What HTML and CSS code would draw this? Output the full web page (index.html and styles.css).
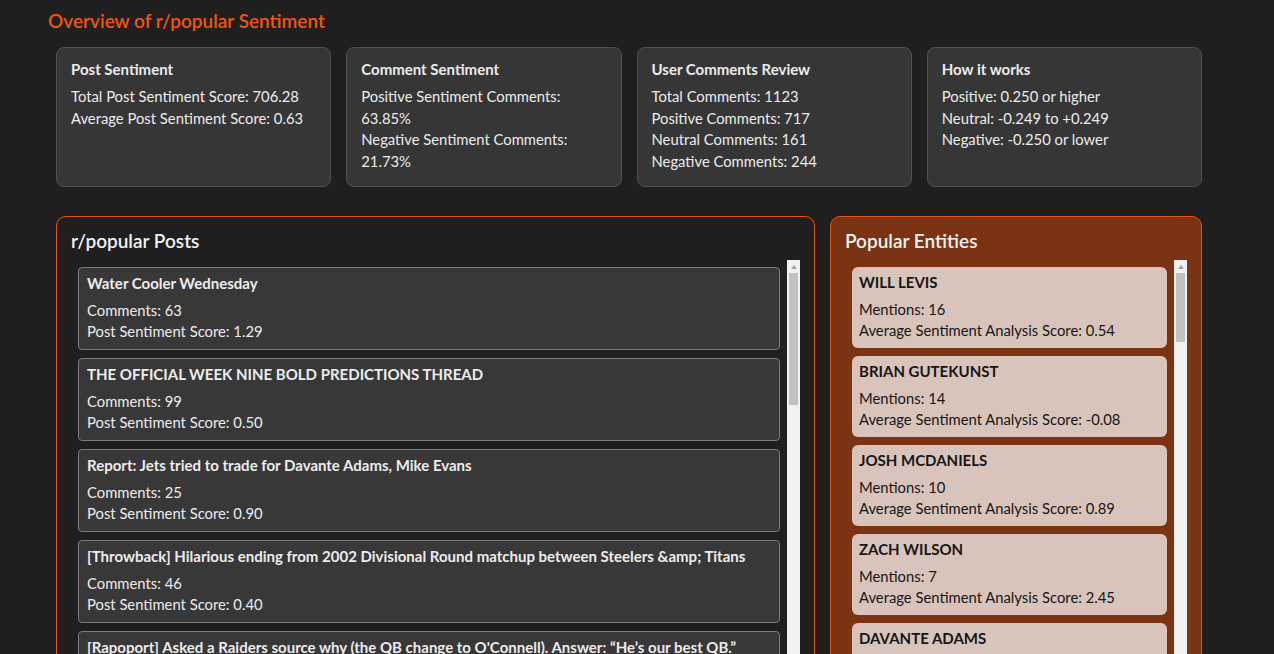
FILE: index.html
```html
<!DOCTYPE html>
<html lang="en">
<head>
<meta charset="utf-8">
<title>r/popular Sentiment</title>
<link rel="stylesheet" href="styles.css">
</head>
<body>
<main class="page">
  <h1 class="page-title">Overview of r/popular Sentiment</h1>

  <section class="stats">
    <div class="stat-card">
      <h2 class="stat-title">Post Sentiment</h2>
      <p class="stat-line">Total Post Sentiment Score: 706.28</p>
      <p class="stat-line">Average Post Sentiment Score: 0.63</p>
    </div>
    <div class="stat-card">
      <h2 class="stat-title">Comment Sentiment</h2>
      <p class="stat-line">Positive Sentiment Comments: 63.85%</p>
      <p class="stat-line">Negative Sentiment Comments: 21.73%</p>
    </div>
    <div class="stat-card">
      <h2 class="stat-title">User Comments Review</h2>
      <p class="stat-line">Total Comments: 1123</p>
      <p class="stat-line">Positive Comments: 717</p>
      <p class="stat-line">Neutral Comments: 161</p>
      <p class="stat-line">Negative Comments: 244</p>
    </div>
    <div class="stat-card">
      <h2 class="stat-title">How it works</h2>
      <p class="stat-line">Positive: 0.250 or higher</p>
      <p class="stat-line">Neutral: -0.249 to +0.249</p>
      <p class="stat-line">Negative: -0.250 or lower</p>
    </div>
  </section>

  <section class="panels">
    <div class="panel panel-posts">
      <h2 class="panel-title">r/popular Posts</h2>
      <div class="list-wrap">
        <div class="scroll-list">
          <div class="post">
            <h3 class="post-title">Water Cooler Wednesday</h3>
            <p class="post-line">Comments: 63</p>
            <p class="post-line">Post Sentiment Score: 1.29</p>
          </div>
          <div class="post">
            <h3 class="post-title">THE OFFICIAL WEEK NINE BOLD PREDICTIONS THREAD</h3>
            <p class="post-line">Comments: 99</p>
            <p class="post-line">Post Sentiment Score: 0.50</p>
          </div>
          <div class="post">
            <h3 class="post-title">Report: Jets tried to trade for Davante Adams, Mike Evans</h3>
            <p class="post-line">Comments: 25</p>
            <p class="post-line">Post Sentiment Score: 0.90</p>
          </div>
          <div class="post">
            <h3 class="post-title">[Throwback] Hilarious ending from 2002 Divisional Round matchup between Steelers &amp;amp; Titans</h3>
            <p class="post-line">Comments: 46</p>
            <p class="post-line">Post Sentiment Score: 0.40</p>
          </div>
          <div class="post">
            <h3 class="post-title">[Rapoport] Asked a Raiders source why (the QB change to O'Connell). Answer: “He’s our best QB.”</h3>
            <p class="post-line">Comments: 88</p>
            <p class="post-line">Post Sentiment Score: 0.71</p>
          </div>
          <div class="post">
            <h3 class="post-title">Titans QB Will Levis to start against the Falcons</h3>
            <p class="post-line">Comments: 112</p>
            <p class="post-line">Post Sentiment Score: 0.82</p>
          </div>
        </div>
        <div class="scrollbar" aria-hidden="true">
          <div class="scroll-arrow"></div>
          <div class="scroll-thumb thumb-posts"></div>
        </div>
      </div>
    </div>

    <div class="panel panel-entities">
      <h2 class="panel-title">Popular Entities</h2>
      <div class="list-wrap">
        <div class="scroll-list">
          <div class="entity"><h3 class="entity-name">WILL LEVIS</h3><p class="entity-line">Mentions: 16</p><p class="entity-line">Average Sentiment Analysis Score: 0.54</p></div>
          <div class="entity"><h3 class="entity-name">BRIAN GUTEKUNST</h3><p class="entity-line">Mentions: 14</p><p class="entity-line">Average Sentiment Analysis Score: -0.08</p></div>
          <div class="entity"><h3 class="entity-name">JOSH MCDANIELS</h3><p class="entity-line">Mentions: 10</p><p class="entity-line">Average Sentiment Analysis Score: 0.89</p></div>
          <div class="entity"><h3 class="entity-name">ZACH WILSON</h3><p class="entity-line">Mentions: 7</p><p class="entity-line">Average Sentiment Analysis Score: 2.45</p></div>
          <div class="entity"><h3 class="entity-name">DAVANTE ADAMS</h3><p class="entity-line">Mentions: 7</p><p class="entity-line">Average Sentiment Analysis Score: 0.61</p></div>
          <div class="entity"><h3 class="entity-name">MIKE EVANS</h3><p class="entity-line">Mentions: 6</p><p class="entity-line">Average Sentiment Analysis Score: 0.47</p></div>
        </div>
        <div class="scrollbar" aria-hidden="true">
          <div class="scroll-arrow"></div>
          <div class="scroll-thumb thumb-entities"></div>
        </div>
      </div>
    </div>
  </section>
</main>
</body>
</html>
```

FILE: styles.css
```css
* {
  box-sizing: border-box;
}

html, body {
  margin: 0;
  padding: 0;
  background: #1f1f1f;
}

body {
  font-family: Lato, "Open Sans", "Liberation Sans", sans-serif;
  color: #ececec;
}

.page {
  padding: 10px 72px 40px 48px;
}

.page-title {
  margin: 0 0 15px;
  font-size: 19px;
  line-height: 22px;
  font-weight: 600;
  color: #f0570d;
}

.stats {
  display: grid;
  grid-template-columns: repeat(4, 1fr);
  gap: 15px;
  margin-left: 8px;
}

.stat-card {
  background: #363636;
  border: 1px solid #505050;
  border-radius: 8px;
  padding: 12px 14px 14px;
  min-height: 140px;
}

.stat-title {
  margin: 0 0 8px;
  font-size: 15px;
  line-height: 18px;
  font-weight: 700;
}

.stat-line {
  margin: 0;
  font-size: 14.8px;
  line-height: 21.6px;
}

.panels {
  display: grid;
  grid-template-columns: 759fr 372fr;
  gap: 15px;
  margin: 29px 0 0 8px;
}

.panel {
  border: 1px solid #e8530e;
  border-radius: 10px;
  padding: 14px;
}

.panel-posts {
  background: #1f1f1f;
}

.panel-entities {
  background: #7a3414;
}

.panel-title {
  margin: 0 0 9px;
  font-size: 19px;
  line-height: 20px;
  font-weight: 600;
  color: #f2f2f2;
}

.list-wrap {
  display: flex;
  height: 400px;
}

.scroll-list {
  flex: 1;
  min-width: 0;
  overflow: hidden;
  padding: 7px 7px 0 7px;
  display: flex;
  flex-direction: column;
  gap: 8px;
}

.scrollbar {
  flex: none;
  width: 13px;
  background: #f1f1f1;
  display: flex;
  flex-direction: column;
  align-items: center;
}

.scroll-arrow {
  flex: none;
  width: 0;
  height: 0;
  margin: 5px 0 4px;
  border-left: 3.5px solid transparent;
  border-right: 3.5px solid transparent;
  border-bottom: 4px solid #a3a3a3;
}

.scroll-thumb {
  flex: none;
  align-self: stretch;
  margin: 0 2px;
  background: #c1c1c1;
}

.thumb-posts {
  height: 132px;
}

.thumb-entities {
  height: 69px;
}

.post {
  flex: none;
  background: #383838;
  border: 1px solid #7a7a7a;
  border-radius: 4px;
  padding: 6px 8px 7px;
}

.post-title,
.entity-name {
  margin: 0 0 8px;
  font-size: 15px;
  line-height: 18px;
  font-weight: 700;
}

.post-line,
.entity-line {
  margin: 0;
  font-size: 14.8px;
  line-height: 21px;
}

.entity {
  flex: none;
  background: #d9c4bb;
  color: #161616;
  border-radius: 6px;
  padding: 6px 7px 7px;
}
```
